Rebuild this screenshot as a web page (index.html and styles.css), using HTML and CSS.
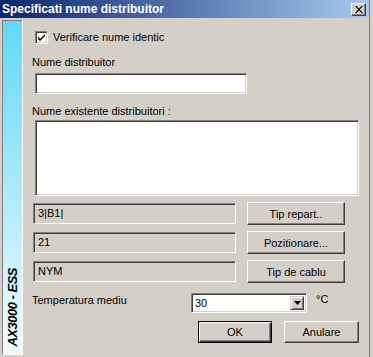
FILE: index.html
```html
<!DOCTYPE html>
<html lang="ro">
<head>
    <meta charset="UTF-8">
    <title>Specificati nume distribuitor</title>
    <link rel="stylesheet" href="styles.css">
</head>
<body>
    <div class="window">
        <!-- bara de titlu -->
        <div class="titlebar">
            <span class="title">Specificati nume distribuitor</span>
            <span class="close-btn">
                <svg width="8" height="7" viewBox="0 0 8 7"><path d="M0 0 L1.5 0 L4 2.5 L6.5 0 L8 0 L4.75 3.5 L8 7 L6.5 7 L4 4.5 L1.5 7 L0 7 L3.25 3.5 Z" fill="#000"/></svg>
            </span>
        </div>

        <div class="client">
            <!-- banda laterala -->
            <div class="stripe">
                <span class="stripe-text">AX3000 - ESS</span>
            </div>

            <div class="content">
                <div class="check-row">
                    <span class="checkbox">
                        <svg width="7" height="7" viewBox="0 0 7 7"><path d="M0 2 L0 5 L2 7 L7 2 L7 0 L2 5 Z" fill="#000"/></svg>
                    </span>
                    <span class="check-label">Verificare nume identic</span>
                </div>

                <div class="label">Nume distribuitor</div>
                <div class="sunken edit"></div>

                <div class="label label-list">Nume existente distribuitori :</div>
                <div class="sunken listbox"></div>

                <div class="field-row">
                    <div class="sunken field">3|B1|</div>
                    <div class="btn btn-wide">Tip repart..</div>
                </div>
                <div class="field-row">
                    <div class="sunken field">21</div>
                    <div class="btn btn-wide">Pozitionare...</div>
                </div>
                <div class="field-row">
                    <div class="sunken field">NYM</div>
                    <div class="btn btn-wide">Tip de cablu</div>
                </div>

                <div class="temp-row">
                    <span class="temp-label">Temperatura mediu</span>
                    <div class="sunken combo">
                        <span class="combo-value">30</span>
                        <span class="combo-arrow">
                            <svg width="7" height="4" viewBox="0 0 7 4"><path d="M0 0 L7 0 L3.5 4 Z" fill="#000"/></svg>
                        </span>
                    </div>
                    <span class="unit">°C</span>
                </div>

                <div class="actions">
                    <div class="btn btn-default">OK</div>
                    <div class="btn btn-cancel">Anulare</div>
                </div>
            </div>
        </div>
    </div>
</body>
</html>
```

FILE: styles.css
```css
* { margin: 0; padding: 0; box-sizing: border-box; }
body { background: #d4d0c8; font-family: "Liberation Sans", Arial, sans-serif; font-size: 11px; color: #000; overflow: hidden; }

.window { width: 370px; height: 357px; border-right: 1px solid #808080; background: #d4d0c8; }

.titlebar { height: 18px; display: flex; align-items: center; justify-content: space-between; padding: 0 3px 0 2px; background: linear-gradient(to right, #0a246a, #a6caf0); }
.title { color: #fff; font-weight: bold; font-size: 12px; line-height: 18px; }
.close-btn { width: 15px; height: 13px; display: flex; align-items: center; justify-content: center; background: #d4d0c8; border: 1px solid; border-color: #fff #404040 #404040 #fff; box-shadow: inset -1px -1px 0 #808080; }

.client { display: flex; height: 339px; }

.stripe { width: 22px; height: 335px; margin: 2px 0 0 2px; border: 1px solid; border-color: #808080 #fff #fff #808080; background: linear-gradient(#62d8f6, #f2fbff); display: flex; flex-direction: column; justify-content: flex-end; align-items: center; padding-bottom: 7px; }
.stripe-text { writing-mode: vertical-rl; transform: rotate(180deg); font-style: italic; font-weight: bold; font-size: 13px; letter-spacing: -0.5px; white-space: nowrap; }

.content { flex: 1; padding: 0 10px 0 9px; }

.sunken { border: 1px solid; border-color: #808080 #fff #fff #808080; box-shadow: inset 1px 1px 0 #404040, inset -1px -1px 0 #d4d0c8; }

.check-row { display: flex; align-items: center; height: 13px; margin-top: 13px; padding-left: 3px; }
.checkbox { width: 13px; height: 13px; display: flex; align-items: center; justify-content: center; background: #fff; border: 1px solid; border-color: #808080 #fff #fff #808080; box-shadow: inset 1px 1px 0 #404040, inset -1px -1px 0 #d4d0c8; }
.check-label { margin-left: 5px; line-height: 13px; }

.label { line-height: 13px; margin-top: 12px; }
.label-list { margin-top: 11px; }

.edit { width: 212px; height: 21px; margin: 4px 0 0 3px; background: #fff; }
.listbox { width: 324px; height: 76px; margin: 2px 0 0 3px; background: #fff; }

.field-row { display: flex; align-items: center; height: 23px; margin-top: 6px; }
.field { width: 203px; height: 21px; margin-left: 1px; padding-left: 4px; line-height: 19px; background: #d4d0c8; }

.btn { height: 23px; display: flex; align-items: center; justify-content: center; background: #d4d0c8; border: 1px solid; border-color: #fff #404040 #404040 #fff; box-shadow: inset -1px -1px 0 #808080; }
.btn-wide { width: 98px; margin-left: 11px; }

.temp-row { display: flex; align-items: flex-start; height: 20px; margin-top: 10px; }
.temp-label { width: 159px; line-height: 13px; margin-top: 1px; }
.combo { width: 116px; height: 20px; display: flex; align-items: center; justify-content: space-between; background: #fff; padding: 2px; }
.combo-value { padding-left: 1px; line-height: 14px; }
.combo-arrow { width: 14px; height: 14px; display: flex; align-items: center; justify-content: center; background: #d4d0c8; border: 1px solid; border-color: #d4d0c8 #404040 #404040 #d4d0c8; box-shadow: inset 1px 1px 0 #fff, inset -1px -1px 0 #808080; }
.unit { margin-left: 9px; line-height: 13px; }

.actions { display: flex; justify-content: flex-end; gap: 12px; margin-top: 8px; }
.btn-default { width: 74px; height: 22px; border: 1px solid #000; box-shadow: inset 1px 1px 0 #fff, inset -1px -1px 0 #404040, inset -2px -2px 0 #808080; }
.btn-cancel { width: 75px; height: 22px; }
```
